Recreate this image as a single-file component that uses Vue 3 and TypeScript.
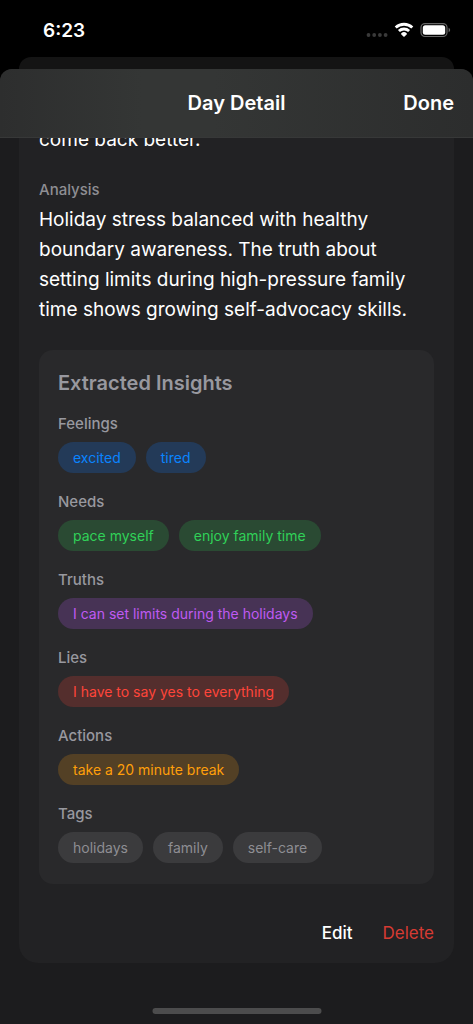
<script setup lang="ts">
interface InsightGroup {
  title: string
  tone: string
  items: string[]
}

const groups: InsightGroup[] = [
  { title: 'Feelings', tone: 'blue', items: ['excited', 'tired'] },
  { title: 'Needs', tone: 'green', items: ['pace myself', 'enjoy family time'] },
  { title: 'Truths', tone: 'purple', items: ['I can set limits during the holidays'] },
  { title: 'Lies', tone: 'red', items: ['I have to say yes to everything'] },
  { title: 'Actions', tone: 'orange', items: ['take a 20 minute break'] },
  { title: 'Tags', tone: 'gray', items: ['holidays', 'family', 'self-care'] },
]
</script>

<template>
  <div class="screen">
    <div class="status">
      <time class="clock">6:23</time>
      <div class="indicators">
        <svg class="dots" width="22" height="20" viewBox="0 0 22 20" aria-hidden="true">
          <circle cx="2.500" cy="15" r="1.900" />
          <circle cx="8.200" cy="15" r="1.900" />
          <circle cx="13.900" cy="15" r="1.900" />
          <circle cx="19.600" cy="15" r="1.900" />
        </svg>
        <svg class="wifi" width="20" height="20" viewBox="0 0 20 20" aria-hidden="true">
          <path d="M1.700 7.600 C6.400 3.100 13.600 3.100 18.300 7.600" />
          <path d="M4.900 11 C7.800 8.300 12.200 8.300 15.100 11" />
          <path class="wedge" d="M10 16 L7.900 13.900 C9 12.900 11 12.900 12.100 13.900 Z" />
        </svg>
        <svg class="battery" width="31" height="20" viewBox="0 0 31 20" aria-hidden="true">
          <rect class="shell" x="1" y="3.600" width="26" height="12.900" rx="4" />
          <rect class="charge" x="2.800" y="5.300" width="22.400" height="9.500" rx="2.500" />
          <path class="cap" d="M28.600 7.800 C30.600 8.600 30.600 11.500 28.600 12.300 Z" />
        </svg>
      </div>
    </div>

    <div class="behind"></div>

    <div class="sheet">
      <header class="bar">
        <h1>Day Detail</h1>
        <button type="button" class="done">Done</button>
      </header>

      <main class="scroller">
        <article class="entry">
          <p class="body reflection">come back better.</p>
          <h2 class="caption">Analysis</h2>
          <p class="body">
            Holiday stress balanced with healthy boundary awareness. The truth about setting limits
            during high-pressure family time shows growing self-advocacy skills.
          </p>

          <section class="insights">
            <h2>Extracted Insights</h2>
            <section v-for="group in groups" :key="group.title" class="group">
              <h3>{{ group.title }}</h3>
              <ul class="chips" :class="group.tone">
                <li v-for="item in group.items" :key="item">{{ item }}</li>
              </ul>
            </section>
          </section>

          <footer class="actions">
            <button type="button">Edit</button>
            <button type="button" class="delete">Delete</button>
          </footer>
        </article>
      </main>
      <div class="home"></div>
    </div>
  </div>
</template>

<style>
body {
  margin: 0;
  background: #000;
}
</style>

<style scoped>
.screen {
  box-sizing: border-box;
  min-height: 100vh;
  display: flex;
  flex-direction: column;
  background: #000;
  color: #fff;
  font-family: Inter, 'Open Sans', sans-serif;
}

h1,
h2,
h3,
p,
ul {
  margin: 0;
  padding: 0;
}

button {
  padding: 0;
  border: 0;
  background: none;
  color: inherit;
  font-family: inherit;
}

.status {
  box-sizing: border-box;
  height: 57px;
  padding: 20px 22px 17px 43px;
  display: flex;
  justify-content: space-between;
  align-items: flex-end;
}

.clock {
  font-size: 19px;
  line-height: 18px;
  font-weight: 600;
}

.indicators {
  display: flex;
  align-items: center;
  gap: 6px;
}

.indicators svg {
  display: block;
}

.dots {
  fill: #3a3a3a;
}

.wifi {
  fill: none;
  stroke: #fff;
  stroke-width: 2.800;
}

.wifi .wedge {
  fill: #fff;
  stroke: #fff;
  stroke-width: 1.600;
  stroke-linejoin: round;
}

.battery .shell {
  fill: none;
  stroke: #666;
  stroke-width: 1.200;
}

.battery .charge {
  fill: #fff;
}

.battery .cap {
  fill: #666;
}

.behind {
  height: 12px;
  margin: 0 19px;
  border-radius: 12px 12px 0 0;
  background: #141414;
}

.sheet {
  position: relative;
  flex: 1;
  display: flex;
  flex-direction: column;
  overflow: hidden;
  border-radius: 12px 12px 0 0;
  background: #1c1c1e;
}

.bar {
  box-sizing: border-box;
  height: 69px;
  padding: 0 19px;
  display: grid;
  grid-template-columns: 1fr auto 1fr;
  align-items: center;
  border-bottom: 1px solid #373838;
  background: linear-gradient(90deg, #2d2e2e, #343635 30%, #343635 45%, #2c2d2d);
}

.bar h1 {
  grid-column: 2;
  font-size: 20px;
  line-height: 24px;
  font-weight: 600;
}

.done {
  justify-self: end;
  font-size: 20px;
  line-height: 24px;
  font-weight: 600;
}

.scroller {
  flex: 1;
  overflow: hidden;
  padding: 0 19px 61px;
}

.entry {
  padding: 0 20px 17px;
  border-radius: 0 0 19px 19px;
  background: #222224;
}

.body {
  font-size: 19px;
  line-height: 30px;
}

.reflection {
  margin-top: -13px;
}

.caption {
  margin-top: 26px;
  margin-bottom: 6px;
  font-size: 15px;
  line-height: 18px;
  font-weight: 500;
  color: #8e8e93;
}

.insights {
  margin-top: 25px;
  padding: 21px 19px;
  border-radius: 14px;
  background: #29292b;
  color: #98989f;
}

.insights h2 {
  font-size: 20px;
  line-height: 24px;
  font-weight: 600;
}

.group {
  margin-top: 20px;
}

.group h3 {
  font-size: 15px;
  line-height: 18px;
  font-weight: 500;
}

.chips {
  margin-top: 9px;
  display: flex;
  flex-wrap: wrap;
  gap: 10px;
  list-style: none;
}

.chips li {
  padding: 6px 15px;
  border-radius: 16px;
  font-size: 14px;
  line-height: 19px;
}

.blue li {
  background: #233a58;
  color: #0a84ff;
}

.green li {
  background: #2a4a33;
  color: #30d158;
}

.purple li {
  background: #473355;
  color: #bf5af2;
}

.red li {
  background: #542e2d;
  color: #ff453a;
}

.orange li {
  background: #534025;
  color: #ff9f0a;
}

.gray li {
  background: #3b3b3d;
  color: #8e8e93;
}

.actions {
  margin-top: 36px;
  display: flex;
  justify-content: flex-end;
  gap: 30px;
}

.actions button {
  font-size: 17px;
  line-height: 26px;
  font-weight: 500;
}

.actions .delete {
  font-weight: 400;
  color: #d63b33;
}

.home {
  position: absolute;
  bottom: 10px;
  left: 50%;
  width: 169px;
  height: 6px;
  border-radius: 3px;
  background: #4c4c4d;
  transform: translateX(-50%);
}
</style>
